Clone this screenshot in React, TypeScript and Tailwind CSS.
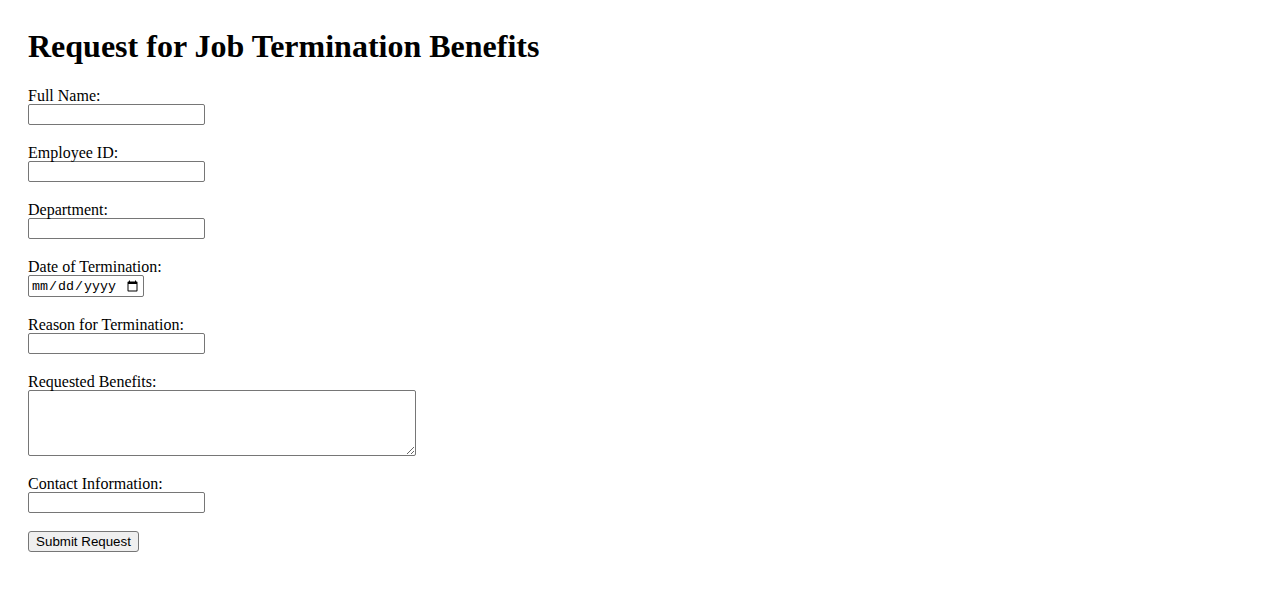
import React from 'react';

const fields = [
  { id: 'name', label: 'Full Name:', type: 'text' },
  { id: 'empId', label: 'Employee ID:', type: 'text' },
  { id: 'dept', label: 'Department:', type: 'text' },
  { id: 'date', label: 'Date of Termination:', type: 'date' },
  { id: 'reason', label: 'Reason for Termination:', type: 'text' },
  { id: 'benefits', label: 'Requested Benefits:', type: 'textarea' },
  { id: 'contact', label: 'Contact Information:', type: 'text' },
];

const control =
  'block border border-[#767676] rounded-[2px] bg-white text-black text-[13.333px] font-["Liberation_Sans",Arial,sans-serif] px-[2px]';

export default function App() {
  return (
    <div className="min-h-screen bg-white text-black px-[28px] pt-[28px] font-['Liberation_Serif','Times_New_Roman',serif]">
      <h1 className="text-[32px] font-bold leading-[37px] mb-[21px]">Request for Job Termination Benefits</h1>

      <form onSubmit={e => e.preventDefault()}>
        {fields.map(f => (
          <div key={f.id} className="mb-[18px]">
            <label htmlFor={f.id} className="block text-[16px] leading-[18px] h-[18px] pt-px">
              {f.label}
            </label>
            {f.type === 'textarea' ? (
              <textarea id={f.id} className={`${control} py-[1px] w-[388px] h-[66px] resize`} />
            ) : f.type === 'date' ? (
              <input id={f.id} type="date" className={`${control} pt-[3px] pb-px w-[116px] h-[22px] font-['Liberation_Mono',monospace]`} />
            ) : (
              <input id={f.id} type="text" className={`${control} py-[1px] w-[177px] h-[21px]`} />
            )}
          </div>
        ))}

        <button
          type="submit"
          className="block w-[111px] h-[21px] border border-[#767676] rounded-[3px] bg-[#efefef] text-[13.333px] font-['Liberation_Sans',Arial,sans-serif] px-[6px] leading-none"
        >
          Submit Request
        </button>
      </form>
    </div>
  );
}
